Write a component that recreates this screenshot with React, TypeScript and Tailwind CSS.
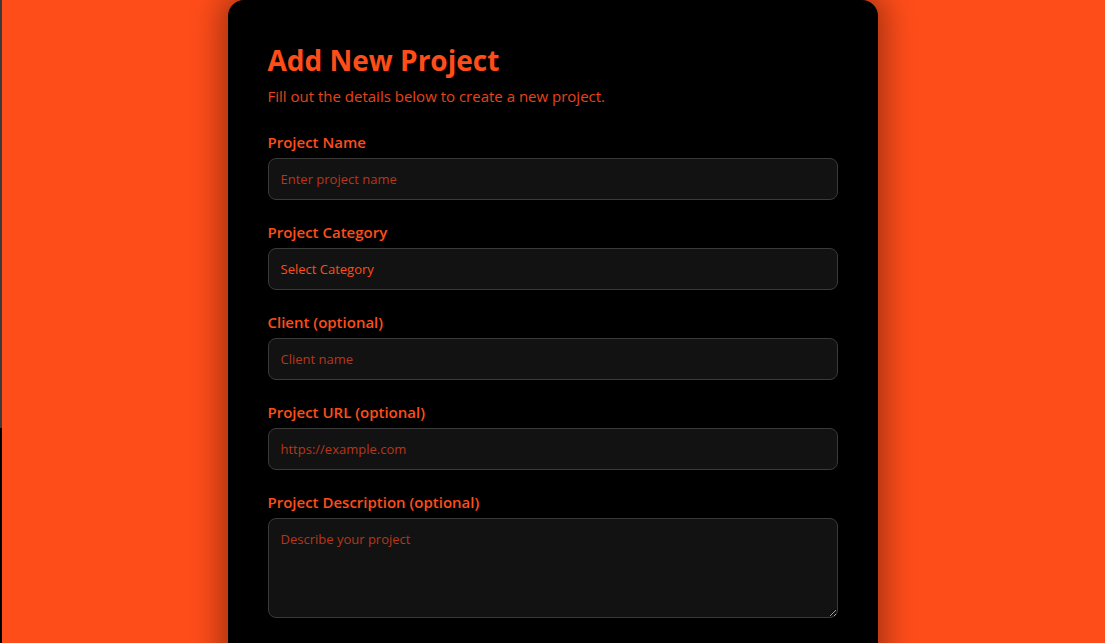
import React from 'react';

const labelCls = 'block mb-1 text-[15px] leading-6 font-semibold text-[#ff4d1a]';
const fieldCls =
  'w-full h-[42px] rounded-lg border border-[#3a3a3a] bg-[#121212] px-3 py-2.5 text-[13px] leading-5 text-[#ff4d1a] placeholder:text-[#b8361a] outline-none';

const App: React.FC = () => {
  return (
    <div className="min-h-screen bg-[#ff4d1a] font-['Open_Sans','Noto_Sans',sans-serif]">
      {/* odd dark strip on the far left edge */}
      <div className="fixed left-0 top-0 bottom-0 w-[2px] flex flex-col">
        <div className="h-[428px] bg-[#3b3b3b]" />
        <div className="flex-1 bg-black" />
      </div>

      <div className="flex justify-center">
        <div className="w-[650px] min-h-[700px] bg-black rounded-2xl shadow-[0_0_30px_8px_rgba(0,0,0,0.35)] px-10 pt-[42px] pb-10">
          <h1 className="text-[28px] leading-9 font-bold text-[#ff4d1a]">Add New Project</h1>
          <p className="mt-1.5 text-[15px] leading-6 text-[#e8431a]">
            Fill out the details below to create a new project.
          </p>

          <form className="mt-[22px] flex flex-col gap-5">
            <div>
              <label className={labelCls}>Project Name</label>
              <input className={fieldCls} placeholder="Enter project name" />
            </div>
            <div>
              <label className={labelCls}>Project Category</label>
              <select className={fieldCls + ' appearance-none py-0'} defaultValue="">
                <option value="">Select Category</option>
                <option value="web">Web</option>
                <option value="mobile">Mobile</option>
              </select>
            </div>
            <div>
              <label className={labelCls}>Client (optional)</label>
              <input className={fieldCls} placeholder="Client name" />
            </div>
            <div>
              <label className={labelCls}>Project URL (optional)</label>
              <input className={fieldCls} placeholder="https://example.com" />
            </div>
            <div>
              <label className={labelCls}>Project Description (optional)</label>
              <textarea className={fieldCls + ' h-[100px] block'} placeholder="Describe your project" />
            </div>
          </form>
        </div>
      </div>
    </div>
  );
};

export default App;
